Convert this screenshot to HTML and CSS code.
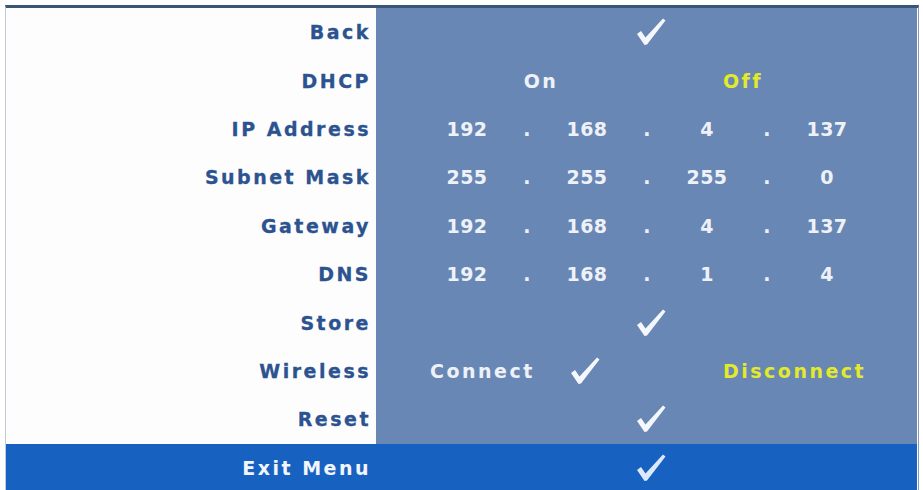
FILE: index.html
```html
<!DOCTYPE html>
<html lang="en">
<head>
    <meta charset="UTF-8">
    <meta name="viewport" content="width=device-width, initial-scale=1.0">
    <title>Network Settings</title>
    <link rel="stylesheet" href="styles.css">
</head>
<body>
    <div class="menu">
        <div class="row">
            <div class="label">Back</div>
            <div class="value single">
                <svg class="check" viewBox="0 0 30 28"><path d="M1 16 L5 13 L9.5 19.5 L27 0.5 L29.5 2.5 L11 26.5 L8.5 27 Z"/></svg>
            </div>
        </div>
        <div class="row">
            <div class="label">DHCP</div>
            <div class="value pair">
                <span>On</span>
                <span class="selected">Off</span>
            </div>
        </div>
        <div class="row">
            <div class="label">IP Address</div>
            <div class="value ip">
                <span>192</span><span>.</span><span>168</span><span>.</span><span>4</span><span>.</span><span>137</span>
            </div>
        </div>
        <div class="row">
            <div class="label">Subnet Mask</div>
            <div class="value ip">
                <span>255</span><span>.</span><span>255</span><span>.</span><span>255</span><span>.</span><span>0</span>
            </div>
        </div>
        <div class="row">
            <div class="label">Gateway</div>
            <div class="value ip">
                <span>192</span><span>.</span><span>168</span><span>.</span><span>4</span><span>.</span><span>137</span>
            </div>
        </div>
        <div class="row">
            <div class="label">DNS</div>
            <div class="value ip">
                <span>192</span><span>.</span><span>168</span><span>.</span><span>1</span><span>.</span><span>4</span>
            </div>
        </div>
        <div class="row">
            <div class="label">Store</div>
            <div class="value single">
                <svg class="check" viewBox="0 0 30 28"><path d="M1 16 L5 13 L9.5 19.5 L27 0.5 L29.5 2.5 L11 26.5 L8.5 27 Z"/></svg>
            </div>
        </div>
        <div class="row">
            <div class="label">Wireless</div>
            <div class="value wireless">
                <span>Connect</span>
                <svg class="check" viewBox="0 0 30 28"><path d="M1 16 L5 13 L9.5 19.5 L27 0.5 L29.5 2.5 L11 26.5 L8.5 27 Z"/></svg>
                <span class="selected">Disconnect</span>
            </div>
        </div>
        <div class="row">
            <div class="label">Reset</div>
            <div class="value single">
                <svg class="check" viewBox="0 0 30 28"><path d="M1 16 L5 13 L9.5 19.5 L27 0.5 L29.5 2.5 L11 26.5 L8.5 27 Z"/></svg>
            </div>
        </div>
        <div class="row exit">
            <div class="label">Exit Menu</div>
            <div class="value single">
                <svg class="check" viewBox="0 0 30 28"><path d="M1 16 L5 13 L9.5 19.5 L27 0.5 L29.5 2.5 L11 26.5 L8.5 27 Z"/></svg>
            </div>
        </div>
    </div>
</body>
</html>
```

FILE: styles.css
```css
body {
    margin: 0;
    background: #ffffff;
    font-family: "DejaVu Sans", "Liberation Sans", sans-serif;
    overflow: hidden;
}
.menu {
    margin: 5px 0 0 5px;
    width: 912px;
    border-top: 3px solid #3b5576;
    border-left: 1px solid #c6ccd6;
    border-right: 1px solid #8c9bb4;
}
.row {
    display: grid;
    grid-template-columns: 370px 541px;
    height: 48.4px;
}
.label {
    display: flex;
    align-items: center;
    justify-content: flex-end;
    padding-right: 5px;
    background: #fdfdfe;
    color: #2c5390;
    font-size: 19px;
    font-weight: bold;
    letter-spacing: 2.5px;
    -webkit-text-stroke: 0.3px #2c5390;
}
.value {
    display: flex;
    align-items: center;
    background: #6987b4;
    color: #eef2f8;
    font-size: 19px;
    font-weight: bold;
    letter-spacing: 2.5px;
}
.selected { color: #e2ea2c; }
.check {
    width: 30px;
    height: 28px;
    fill: #f4f7fb;
}
.single {
    justify-content: flex-start;
    padding-left: 260px;
}
.pair {
    display: grid;
    grid-template-columns: 202px 202px;
    padding-left: 64px;
    text-align: center;
}
.ip {
    display: grid;
    grid-template-columns: repeat(7, 60px);
    padding-left: 61px;
    text-align: center;
    letter-spacing: 0.5px;
}
.wireless {
    display: grid;
    grid-template-columns: 140px 153px auto;
    padding-left: 54px;
}
.exit { height: 48px; }
.exit .label,
.exit .value {
    background: #1762c1;
    color: #f2f6fc;
    -webkit-text-stroke: 0;
}
.exit .check { fill: #dce9fa; }
```
